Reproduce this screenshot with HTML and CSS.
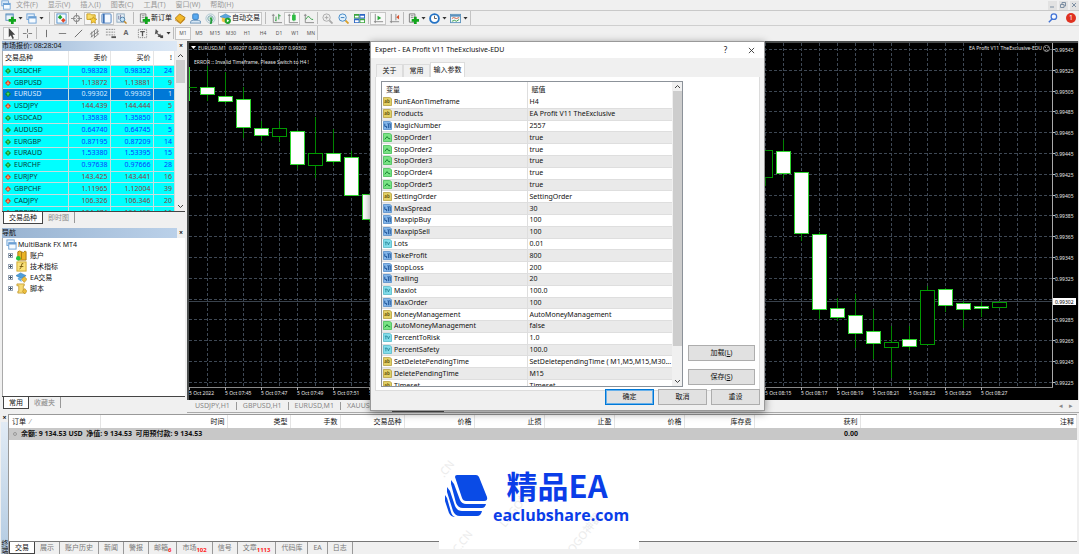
FILE: index.html
```
<!DOCTYPE html>
<html>
<head>
<meta charset="utf-8">
<title>MultiBank FX MT4</title>
<link rel="stylesheet" href="styles.css">
</head>
<body>
<svg class="defs" aria-hidden="true">
  <symbol id="win" viewBox="0 0 12 12"><rect x="1" y="1" width="8" height="6" fill="#e6f1fb" stroke="#6a9fd4"/><rect x="3" y="4" width="8" height="7" fill="#f6fbff" stroke="#6a9fd4"/><path d="M3 5h8" stroke="#6a9fd4" stroke-width="2"/></symbol>
  <symbol id="chartadd" viewBox="0 0 12 12"><rect x="1" y="1" width="8" height="7" fill="#eaf4fb" stroke="#5a8fbd"/><path d="M1 2h8" stroke="#5a8fbd"/><path d="M8 4v8M4 8h8" stroke="#12a51c" stroke-width="3"/></symbol>
  <symbol id="docadd" viewBox="0 0 12 12"><path d="M1.500 1h6v9h-6z" fill="#f4f4f4" stroke="#777"/><path d="M3 3h3M3 5h3" stroke="#888"/><path d="M8 4v8M4 8h8" stroke="#12a51c" stroke-width="3"/></symbol>
  <symbol id="watch" viewBox="0 0 12 12"><rect x="1" y="1" width="10" height="10" fill="#f3faff" stroke="#5390cc"/><path d="M4.500 2l2.500 2.500L4.500 7 2 4.500z" fill="#1ea52d"/><path d="M8 5.500L10.500 8 8 10.500 5.500 8z" fill="#e0492a"/></symbol>
  <symbol id="target" viewBox="0 0 12 12"><circle cx="6" cy="6" r="3.200" fill="none" stroke="#888" stroke-width="1.200"/><path d="M6 0v5M6 7v5M0 6h5M7 6h5" stroke="#888"/></symbol>
  <symbol id="stars" viewBox="0 0 12 12"><path d="M1 1h4l1 1h4v5H1z" fill="#f8dc69" stroke="#c89c1e"/><path d="M8 4l1.200 2.400 2.600.3-1.900 1.800.5 2.700L8 10l-2.400 1.200.5-2.700-1.900-1.800 2.600-.3z" fill="#f8cf3c" stroke="#b98710" stroke-width=".7"/></symbol>
  <symbol id="panel" viewBox="0 0 12 12"><rect x="1" y="1" width="10" height="10" rx="1" fill="#f4f9ff" stroke="#4a7fc0"/><path d="M3 1v10" stroke="#3f72b5" stroke-width="2"/></symbol>
  <symbol id="tester" viewBox="0 0 12 12"><rect x="1" y="1" width="8" height="9" fill="#e8f1f8" stroke="#8ba7be"/><path d="M3 3v4M5 2v4" stroke="#779"/><circle cx="7" cy="7" r="2.500" fill="#c6e3f7" stroke="#4a7da6"/><path d="M9 9l2.500 2.500" stroke="#c38a28" stroke-width="1.600"/></symbol>
  <symbol id="gold" viewBox="0 0 12 12"><path d="M0 6l5-5 6 4-5 6z" fill="#f2b92a" stroke="#b07a12"/><path d="M0 7l6 4 5-6v2l-5 5-6-4z" fill="#c78715"/></symbol>
  <symbol id="user" viewBox="0 0 12 12"><rect x="3" y="1" width="6" height="6" rx="1" fill="#5aaaf0" stroke="#3579bd"/><path d="M0 11q1-4 4-3h5q3 0 3 3z" fill="#d7e7f5" stroke="#6a94ba"/></symbol>
  <symbol id="signal" viewBox="0 0 12 12"><circle cx="6" cy="6" r="5" fill="none" stroke="#a9c4cf"/><circle cx="6" cy="6" r="3" fill="#cfe6d5" stroke="#7ba5b8"/><path d="M6 5q2 3 0 7" stroke="#259c3b" stroke-width="2" fill="none"/></symbol>
  <symbol id="auto" viewBox="0 0 12 12"><path d="M0 4l6-3 6 3-6 2z" fill="#5ba7dc" stroke="#2f7cb4" stroke-width=".6"/><path d="M2 5v4l4 2V6z" fill="#efc44b"/><circle cx="8.500" cy="8.500" r="3.400" fill="#1fa32e"/><path d="M7.500 6.800v3.400l2.700-1.700z" fill="#fff"/></symbol>
  <symbol id="bars" viewBox="0 0 12 12"><path d="M2.500 1v9.500H12M1 2.500h3" stroke="#888" fill="none"/><path d="M5.500 4v5M4.500 8h1M8.500 1v6M8.500 3h2" stroke="#2a9b3b"/></symbol>
  <symbol id="candle" viewBox="0 0 12 12"><path d="M2.500 1v9.500H12M1 2.500h3" stroke="#888" fill="none"/><path d="M7.500 0v9" stroke="#2a9b3b"/><rect x="5.500" y="2" width="4" height="6" fill="#2dbb42"/></symbol>
  <symbol id="line" viewBox="0 0 12 12"><path d="M2.500 1v9.500H12M1 2.500h3" stroke="#888" fill="none"/><path d="M3 7q2.500-5 4.500-2t3.500 2" stroke="#2a9b3b" fill="none"/></symbol>
  <symbol id="zin" viewBox="0 0 12 12"><path d="M8 8l3.500 3.500" stroke="#aaa" stroke-width="2"/><circle cx="5" cy="5" r="4" fill="#eee" stroke="#aaa"/><path d="M3 5h4M5 3v4" stroke="#aaa"/></symbol>
  <symbol id="zout" viewBox="0 0 12 12"><path d="M8 8l3.500 3.500" stroke="#d9a02c" stroke-width="2"/><circle cx="5" cy="5" r="4" fill="#e2f1fc" stroke="#3b84c6"/><path d="M3 5h4" stroke="#2f74b4"/></symbol>
  <symbol id="tile" viewBox="0 0 12 12"><path d="M0 1h6v5H0zM6 6h6v5H6z" fill="#3da63f"/><path d="M6 1h6v5H6zM0 6h6v5H0z" fill="#2c66c4"/><path d="M1 3h4v2H1zM7 3h4v2H7zM1 8h4v2H1zM7 8h4v2H7z" fill="#fff"/></symbol>
  <symbol id="scroll" viewBox="0 0 12 12"><path d="M2.500 1v10M1 9.500h10" stroke="#888"/><path d="M5 3v5l4-2.500z" fill="#28a93a"/></symbol>
  <symbol id="shift" viewBox="0 0 12 12"><path d="M2.500 1v10M1 9.500h10M7.500 1v7" stroke="#888"/><path d="M11 2v5L8 4.500z" fill="#d8512d"/></symbol>
  <symbol id="clock" viewBox="0 0 12 12"><circle cx="6" cy="6" r="4.800" fill="#fff" stroke="#2372c4" stroke-width="2"/><path d="M6 3v3h2.500" stroke="#555" fill="none"/></symbol>
  <symbol id="template" viewBox="0 0 12 12"><rect x=".5" y="1.500" width="11" height="9" fill="#f3f9fd" stroke="#5d92bd"/><path d="M1 3h10" stroke="#5d92bd" stroke-width="2"/><path d="M2 6l2-1 3 1 3-1" stroke="#cf5b39" fill="none"/><path d="M2 9l3-1 2 1 3-2" stroke="#3a9d45" fill="none"/></symbol>
  <symbol id="cursor" viewBox="0 0 12 12"><path d="M3 0v10l2.300-2.200L7 12l1.700-.8L7 7.300h3z" fill="#444"/></symbol>
  <symbol id="cross" viewBox="0 0 12 12"><path d="M6 1v4M6 7v4M1 6h4M7 6h4" stroke="#777"/></symbol>
  <symbol id="vl" viewBox="0 0 12 12"><path d="M6 2v8" stroke="#666"/></symbol>
  <symbol id="hl" viewBox="0 0 12 12"><path d="M2 6h8" stroke="#777"/></symbol>
  <symbol id="tl" viewBox="0 0 12 12"><path d="M2 10l8-8" stroke="#666"/></symbol>
  <symbol id="channel" viewBox="0 0 12 12"><path d="M1 7l7-6M2 10l9-7M5 11l6-5M3 4v6M6 3v7M9 1v6" stroke="#777" stroke-width=".9"/></symbol>
  <symbol id="fibo" viewBox="0 0 12 12"><path d="M1 1.500h10M1 4.500h10M1 7.500h10" stroke="#888" stroke-dasharray="2 1"/><path d="M7 10h5" stroke="#555" stroke-width="2"/></symbol>
  <symbol id="tbox" viewBox="0 0 12 12"><rect x="1.500" y="1.500" width="9" height="9" fill="none" stroke="#777" stroke-dasharray="1 1"/><path d="M3.500 4h5M6 4v5" stroke="#555" stroke-width="1.400"/></symbol>
  <symbol id="arrows" viewBox="0 0 12 12"><path d="M3 1l3 3-1.500 1.500L7 7l1-1 1 4-4-.5L6 8 3.500 6 2 7z" fill="#555"/><path d="M8 8h3v3H8z" fill="#444"/></symbol>
  <symbol id="find" viewBox="0 0 12 12"><circle cx="7.500" cy="4" r="3" fill="#f8fbff" stroke="#4173d6" stroke-width="1.400"/><path d="M5.500 6.500L2 10" stroke="#4173d6" stroke-width="1.600"/></symbol>
  <symbol id="up" viewBox="0 0 8 8"><path d="M4 0l4 4-4 4-4-4z" fill="#0b8d2a"/><path d="M4 1.500L6.500 4H5v2H3V4H1.500z" fill="#4fd965"/></symbol>
  <symbol id="dn" viewBox="0 0 8 8"><path d="M4 0l4 4-4 4-4-4z" fill="#d23a17"/><path d="M4 6.500L1.500 4H3V2h2v2h1.500z" fill="#ff9a6a"/></symbol>
  <symbol id="s" viewBox="0 0 10 10"><path d="M.5.5h7l2 1.500v7.500h-9z" fill="#e2d066" stroke="#b9a548"/><text x="1.500" y="7" font-size="5" font-weight="700" fill="#6b5a10">ab</text></symbol>
  <symbol id="i" viewBox="0 0 10 10"><path d="M.5.5h7l2 1.500v7.500h-9z" fill="#83b6ea" stroke="#5b92cb"/><path d="M2 3v3h2v2M5 3h1v5M7 3h1v5" stroke="#174e91" fill="none"/></symbol>
  <symbol id="b" viewBox="0 0 10 10"><path d="M.5.5h7l2 1.500v7.500h-9z" fill="#78e383" stroke="#4dc05e"/><path d="M2 7l2.500-3L6 6l2 .5" stroke="#0b7428" fill="none"/></symbol>
  <symbol id="d" viewBox="0 0 10 10"><path d="M.5.5h7l2 1.500v7.500h-9z" fill="#82dcea" stroke="#5bbccb"/><path d="M2 3.500h2.500M3.200 3.500V7M5 3.500l1 3 1.500-3" stroke="#18788a" stroke-width=".8" fill="none"/></symbol>
  <symbol id="acct" viewBox="0 0 12 12"><path d="M2 2q2-2 4 0t4-1l1 1v9H2z" fill="#eab325" stroke="#a87810"/><path d="M6 2v8" stroke="#a87810"/><circle cx="2.500" cy="9" r="2.500" fill="#1fc43c"/></symbol>
  <symbol id="ind" viewBox="0 0 12 12"><rect x="1" y="1" width="10" height="10" fill="#f9e27b" stroke="#cfa52a"/><path d="M8 3q-2-1-2 1.500T4 9M4 6h4" stroke="#7a5c10" fill="none"/></symbol>
  <symbol id="ea" viewBox="0 0 12 12"><path d="M0 4l5-3 6 3-5 3z" fill="#4e9edb" stroke="#2a74aa" stroke-width=".6"/><path d="M2 6v2l4 3V7z" fill="#68aee2"/><path d="M9 5l3 3-3 3.500L6 8z" fill="#edbf3e" stroke="#ad7f13" stroke-width=".6"/></symbol>
  <symbol id="script" viewBox="0 0 12 12"><path d="M1 1h8v2H8v5h2v3H2V9h1V3H1z" fill="#f7da74" stroke="#bd9324" stroke-width=".8"/><path d="M9.500 6l2.500 3-2.500 3L7 9z" fill="#edbf3e" stroke="#ad7f13" stroke-width=".6"/></symbol>
</svg>

<div class="app">
  <nav class="menubar">
    <svg class="ic"><use href="#win"/></svg>
    <button>文件(F)</button><button>显示(V)</button><button>插入(I)</button><button>图表(C)</button><button>工具(T)</button><button>窗口(W)</button><button>帮助(H)</button>
    <div class="wincontrols">
      <button aria-label="Minimize"><svg viewBox="0 0 8 8"><path d="M2 6h4"/></svg></button>
      <button aria-label="Restore"><svg viewBox="0 0 8 8"><path d="M3 3V1.500h3.500V5H5M1.500 3.500H5v3H1.500z"/></svg></button>
      <button aria-label="Close"><svg viewBox="0 0 8 8"><path d="M2 2l4 4M6 2L2 6"/></svg></button>
    </div>
  </nav>

  <div class="toolrow">
    <div class="toolbar main-tools">
      <button class="tool" aria-label="New chart"><svg class="ic"><use href="#chartadd"/></svg></button><span class="caret"></span>
      <button class="tool" aria-label="Profiles"><svg class="ic"><use href="#win"/></svg></button><span class="caret"></span><span class="sep slim"></span>
      <button class="tool on" aria-label="Market watch"><svg class="ic"><use href="#watch"/></svg></button>
      <button class="tool" aria-label="Data window"><svg class="ic"><use href="#target"/></svg></button>
      <button class="tool on" aria-label="Navigator"><svg class="ic"><use href="#stars"/></svg></button>
      <button class="tool on" aria-label="Terminal"><svg class="ic"><use href="#panel"/></svg></button>
      <button class="tool" aria-label="Tester"><svg class="ic"><use href="#tester"/></svg></button><span class="sep slim"></span>
      <button class="tool wide"><svg class="ic"><use href="#docadd"/></svg>新订单</button>
      <button class="tool" aria-label="MetaEditor"><svg class="ic"><use href="#gold"/></svg></button>
      <button class="tool" aria-label="Account"><svg class="ic"><use href="#user"/></svg></button>
      <button class="tool" aria-label="Signals"><svg class="ic"><use href="#signal"/></svg></button>
      <button class="tool wide on"><svg class="ic"><use href="#auto"/></svg>自动交易</button><span class="sep slim end"></span>
    </div>
    <div class="toolbar chart-tools">
      <button class="tool" aria-label="Bars"><svg class="ic"><use href="#bars"/></svg></button>
      <button class="tool on" aria-label="Candles"><svg class="ic"><use href="#candle"/></svg></button>
      <button class="tool" aria-label="Line"><svg class="ic"><use href="#line"/></svg></button><span class="sep slim"></span>
      <button class="tool" aria-label="Zoom in"><svg class="ic"><use href="#zin"/></svg></button>
      <button class="tool" aria-label="Zoom out"><svg class="ic"><use href="#zout"/></svg></button>
      <button class="tool" aria-label="Tile"><svg class="ic"><use href="#tile"/></svg></button><span class="sep slim"></span>
      <button class="tool on" aria-label="Auto scroll"><svg class="ic"><use href="#scroll"/></svg></button>
      <button class="tool" aria-label="Chart shift"><svg class="ic"><use href="#shift"/></svg></button><span class="sep slim"></span>
      <button class="tool" aria-label="Indicators"><svg class="ic"><use href="#docadd"/></svg></button><span class="caret"></span>
      <button class="tool" aria-label="Periods"><svg class="ic"><use href="#clock"/></svg></button><span class="caret"></span>
      <button class="tool" aria-label="Templates"><svg class="ic"><use href="#template"/></svg></button><span class="caret"></span>
    </div>
    <div class="notices"><svg class="ic"><use href="#find"/></svg><span class="badge">1</span></div>
  </div>

  <div class="toolrow second">
    <div class="toolbar draw-tools">
      <button class="tool on" aria-label="Cursor"><svg class="ic"><use href="#cursor"/></svg></button>
      <button class="tool" aria-label="Crosshair"><svg class="ic"><use href="#cross"/></svg></button><span class="sep slim"></span>
      <button class="tool" aria-label="Vertical line"><svg class="ic"><use href="#vl"/></svg></button>
      <button class="tool" aria-label="Horizontal line"><svg class="ic"><use href="#hl"/></svg></button>
      <button class="tool" aria-label="Trend line"><svg class="ic"><use href="#tl"/></svg></button>
      <button class="tool" aria-label="Channel"><svg class="ic"><use href="#channel"/></svg></button>
      <button class="tool" aria-label="Fibonacci"><svg class="ic"><use href="#fibo"/></svg></button>
      <button class="tool letter">A</button>
      <button class="tool" aria-label="Label"><svg class="ic"><use href="#tbox"/></svg></button>
      <button class="tool" aria-label="Arrows"><svg class="ic"><use href="#arrows"/></svg></button><span class="caret"></span><span class="sep slim"></span>
    </div>
    <div class="toolbar periods">
      <button class="tool on">M1</button><button class="tool">M5</button><button class="tool">M15</button><button class="tool">M30</button><button class="tool">H1</button><button class="tool">H4</button><button class="tool">D1</button><button class="tool">W1</button><button class="tool">MN</button>
    </div>
  </div>

  <main class="work">
    <aside class="dock">
      <section class="panel market">
        <header class="ptitle"><span>市场报价: 08:28:04</span><button aria-label="Close">×</button></header>
        <div class="pbody">
          <div class="clip">
          <table class="quotes">
            <thead><tr><th>交易品种</th><th>卖价</th><th>买价</th><th>!</th></tr></thead>
            <tbody>
              <tr class="up"><td><svg><use href="#up"/></svg>USDCHF</td><td>0.98328</td><td>0.98352</td><td>24</td></tr>
              <tr class="dn"><td><svg><use href="#dn"/></svg>GBPUSD</td><td>1.13872</td><td>1.13881</td><td>9</td></tr>
              <tr class="sel"><td><svg><use href="#up"/></svg>EURUSD</td><td>0.99302</td><td>0.99303</td><td>1</td></tr>
              <tr class="dn"><td><svg><use href="#dn"/></svg>USDJPY</td><td>144.439</td><td>144.444</td><td>5</td></tr>
              <tr class="up"><td><svg><use href="#up"/></svg>USDCAD</td><td>1.35838</td><td>1.35850</td><td>12</td></tr>
              <tr class="up"><td><svg><use href="#up"/></svg>AUDUSD</td><td>0.64740</td><td>0.64745</td><td>5</td></tr>
              <tr class="up"><td><svg><use href="#up"/></svg>EURGBP</td><td>0.87195</td><td>0.87209</td><td>14</td></tr>
              <tr class="up"><td><svg><use href="#up"/></svg>EURAUD</td><td>1.53380</td><td>1.53395</td><td>15</td></tr>
              <tr class="up"><td><svg><use href="#up"/></svg>EURCHF</td><td>0.97638</td><td>0.97666</td><td>28</td></tr>
              <tr class="dn"><td><svg><use href="#dn"/></svg>EURJPY</td><td>143.425</td><td>143.441</td><td>16</td></tr>
              <tr class="dn"><td><svg><use href="#dn"/></svg>GBPCHF</td><td>1.11965</td><td>1.12004</td><td>39</td></tr>
              <tr class="dn"><td><svg><use href="#dn"/></svg>CADJPY</td><td>106.326</td><td>106.346</td><td>20</td></tr>
              <tr class="dn"><td><svg><use href="#dn"/></svg>GBPJPY</td><td>164.474</td><td>164.490</td><td>16</td></tr>
            </tbody>
          </table>
          </div>
          <div class="sbar"><svg viewBox="0 0 9 9"><path d="M2 6l2.500-2.500L7 6"/></svg><i class="thumb short"></i><svg viewBox="0 0 9 9"><path d="M2 3l2.500 2.500L7 3"/></svg></div>
        </div>
        <div class="ptabs"><button class="on">交易品种</button><button>即时图</button></div>
      </section>
      <section class="panel navigator">
        <header class="ptitle"><span>导航</span><button aria-label="Close">×</button></header>
        <ul class="tree">
          <li class="root"><svg class="ic"><use href="#win"/></svg>MultiBank FX MT4</li>
          <li><i class="plus"></i><svg class="ic"><use href="#acct"/></svg>账户</li>
          <li><i class="plus"></i><svg class="ic"><use href="#ind"/></svg>技术指标</li>
          <li><i class="plus"></i><svg class="ic"><use href="#ea"/></svg>EA交易</li>
          <li><i class="plus"></i><svg class="ic"><use href="#script"/></svg>脚本</li>
        </ul>
        <div class="ptabs"><button class="on">常用</button><button>收藏夹</button></div>
      </section>
    </aside>
    <section class="charts">
      <svg id="chart" class="chart" viewBox="187 41 892 359" preserveAspectRatio="xMinYMin slice"></svg>
      <div class="ctabs"><button>USDJPY,H1</button><button>GBPUSD,H1</button><button>EURUSD,M1</button><button>XAUUSD,H1</button><button class="cur" aria-label="Current chart"></button><span class="arr">◂</span><span class="arr">▸</span></div>
    </section>
  </main>

  <section class="terminal">
    <div class="tstrip"><button aria-label="Close">×</button><span>终端</span></div>
    <div class="tmain">
      <table class="orders">
        <colgroup><col class="w-o"><col class="w-t"><col class="w-k"><col class="w-l"><col class="w-s"><col class="w-p"><col class="w-p"><col class="w-p"><col class="w-p"><col class="w-p"><col class="w-g"><col></colgroup>
        <thead><tr><th>订单 &nbsp;<small>⁄</small></th><th>时间</th><th>类型</th><th>手数</th><th>交易品种</th><th>价格</th><th>止损</th><th>止盈</th><th>价格</th><th>库存费</th><th>获利</th><th>注释</th></tr></thead>
        <tbody><tr><td colspan="10"><i class="dot"></i>余额: 9 134.53 USD &nbsp;净值: 9 134.53 &nbsp;可用预付款: 9 134.53</td><td>0.00</td><td></td></tr></tbody>
      </table>
      <div class="ttabs">
        <button class="on">交易</button><button>展示</button><button>账户历史</button><button>新闻</button><button>警报</button><button>邮箱<sub>6</sub></button><button>市场<sub>102</sub></button><button>信号</button><button>文章<sub>1113</sub></button><button>代码库</button><button>EA</button><button>日志</button>
      </div>
    </div>
  </section>

  <div class="brand">
    <svg class="haze" viewBox="0 0 200 93"><g fill="#ececec" font-size="11"><text transform="translate(5 22) rotate(-52)">.CN</text><text transform="translate(66 72) rotate(-52)">LOGO神器</text><text transform="translate(14 104) rotate(-52)">GC.CN</text><text transform="translate(134 98) rotate(-52)">OGO神器</text></g></svg>
    <svg class="mark" viewBox="0 0 43 44"><g fill="#0a4be6"><path d="M10 3q0-2 2-2h19q2 0 3 2l8 20q1 4-3 4H21q-3 0-4-3z"/><path d="M6 6l3 4 6 16q2 4 6 4h20q-1 4-4 4H18q-5 0-7-5L6 10z"/><path d="M2 13l3 4 5 15q2 5 7 5h20q-1 5-5 5H15q-5 0-7-5L2 18z"/><path d="M0 21l2 3 4 14q1 4 4 5-4 0-6-4L0 27z"/></g></svg>
    <div class="words"><strong>精品EA</strong><b>eaclubshare.com</b></div>
  </div>

  <div class="dialog" role="dialog" aria-label="Expert properties">
    <header class="dtitle"><span>Expert - EA Profit V11 TheExclusive-EDU</span><button>?</button><button class="x" aria-label="Close"><svg viewBox="0 0 8 8"><path d="M1 1l6 6M7 1L1 7"/></svg></button></header>
    <div class="dtabs"><button>关于</button><button>常用</button><button class="on">输入参数</button></div>
    <div class="dpage">
      <div class="list">
        <div class="lclip">
        <table class="params">
          <thead><tr><th>变量</th><th>赋值</th></tr></thead>
          <tbody>
            <tr><td><svg><use href="#s"/></svg>RunEAonTimeframe</td><td>H4</td></tr>
            <tr><td><svg><use href="#s"/></svg>Products</td><td>EA Profit V11 TheExclusive</td></tr>
            <tr><td><svg><use href="#i"/></svg>MagicNumber</td><td>2557</td></tr>
            <tr><td><svg><use href="#b"/></svg>StopOrder1</td><td>true</td></tr>
            <tr><td><svg><use href="#b"/></svg>StopOrder2</td><td>true</td></tr>
            <tr><td><svg><use href="#b"/></svg>StopOrder3</td><td>true</td></tr>
            <tr><td><svg><use href="#b"/></svg>StopOrder4</td><td>true</td></tr>
            <tr><td><svg><use href="#b"/></svg>StopOrder5</td><td>true</td></tr>
            <tr><td><svg><use href="#s"/></svg>SettingOrder</td><td>SettingOrder</td></tr>
            <tr><td><svg><use href="#i"/></svg>MaxSpread</td><td>30</td></tr>
            <tr><td><svg><use href="#i"/></svg>MaxpipBuy</td><td>100</td></tr>
            <tr><td><svg><use href="#i"/></svg>MaxpipSell</td><td>100</td></tr>
            <tr><td><svg><use href="#d"/></svg>Lots</td><td>0.01</td></tr>
            <tr><td><svg><use href="#i"/></svg>TakeProfit</td><td>800</td></tr>
            <tr><td><svg><use href="#i"/></svg>StopLoss</td><td>200</td></tr>
            <tr><td><svg><use href="#i"/></svg>Trailing</td><td>20</td></tr>
            <tr><td><svg><use href="#d"/></svg>Maxlot</td><td>100.0</td></tr>
            <tr><td><svg><use href="#i"/></svg>MaxOrder</td><td>100</td></tr>
            <tr><td><svg><use href="#s"/></svg>MoneyManagement</td><td>AutoMoneyManagement</td></tr>
            <tr><td><svg><use href="#b"/></svg>AutoMoneyManagement</td><td>false</td></tr>
            <tr><td><svg><use href="#d"/></svg>PercentToRisk</td><td>1.0</td></tr>
            <tr><td><svg><use href="#d"/></svg>PercentSafety</td><td>100.0</td></tr>
            <tr><td><svg><use href="#s"/></svg>SetDeletePendingTime</td><td>SetDeletependingTime ( M1,M5,M15,M30...</td></tr>
            <tr><td><svg><use href="#s"/></svg>DeletePendingTime</td><td>M15</td></tr>
            <tr><td><svg><use href="#s"/></svg>Timeset</td><td>Timeset</td></tr>
          </tbody>
        </table>
        </div>
        <div class="sbar"><svg viewBox="0 0 9 9"><path d="M2 6l2.500-2.500L7 6"/></svg><i class="thumb tall"></i><svg viewBox="0 0 9 9"><path d="M2 3l2.500 2.500L7 3"/></svg></div>
      </div>
      <div class="side"><button class="btn">加载(<u>L</u>)</button><button class="btn">保存(<u>S</u>)</button></div>
    </div>
    <footer class="dfoot"><button class="btn primary">确定</button><button class="btn">取消</button><button class="btn">重设</button></footer>
  </div>
</div>
<script src="chart.js"></script>
</body>
</html>
```
FILE: styles.css
```
* { box-sizing: border-box; }
body { margin: 0; background: #f0f0f0; color: #111; font: 7px/10px "Noto Sans", "Noto Sans CJK SC", sans-serif; overflow: hidden; }
button { font: inherit; color: inherit; background: none; border: 0; padding: 0; margin: 0; white-space: nowrap; }
table { border-collapse: collapse; table-layout: fixed; width: 100%; }
th { font-weight: 400; }
.defs { position: absolute; width: 0; height: 0; }
.ic { width: 11px; height: 11px; flex: none; display: block; }
.app { position: relative; min-height: 100vh; display: flex; flex-direction: column; }

.menubar { height: 11px; display: flex; align-items: center; gap: 10px; padding-left: 1px; color: #999; border-bottom: 1px solid #c9c9c9; }
.menubar > .ic { width: 10px; height: 10px; margin-right: -5px; }
.wincontrols { margin-left: auto; display: flex; gap: 2px; }
.wincontrols button { width: 9px; height: 9px; background: #e2e2e2; }
.wincontrols svg { display: block; width: 8px; height: 8px; fill: none; stroke: #7d8fa3; }

.toolrow { height: 15px; display: flex; align-items: center; border-bottom: 1px solid #cfcfcf; }
.toolrow.second { height: 14px; border-bottom: 0; }
.toolbar { display: flex; align-items: center; height: 100%; }
.main-tools { padding-left: 3px; width: 268px; }
.chart-tools { width: 203px; border-right: 1px solid #c4c4c4; }
.draw-tools { width: 175px; padding-left: 3px; }
.periods { width: 143px; border-right: 1px solid #c4c4c4; color: #555; font-size: 5px; }
.tool { width: 16px; height: 13px; display: flex; align-items: center; justify-content: center; flex: none; }
.main-tools .tool { width: 15px; }
.tool.on { background: #f8f8f8; border: 1px solid #c6c6c6; }
.main-tools .wide { width: auto; padding: 0 1px; gap: 1px; }
.tool.letter { font-weight: 700; color: #666; }
.caret { width: 5px; height: 3px; background: #333; clip-path: polygon(0 0, 100% 0, 50% 100%); flex: none; margin-right: 1px; }
.chart-tools .caret { margin-right: 0; }
.sep { width: 1px; height: 12px; margin: 0 1px; background: #bbb; flex: none; }
.main-tools .sep { margin: 0 4px; }
.main-tools .end { margin: 0 2px 0 auto; }
.notices { margin-left: auto; display: flex; gap: 8px; align-items: center; padding-right: 3px; }
.badge { width: 10px; height: 10px; border-radius: 5px; background: #df3120; color: #fff; text-align: center; }

.work { display: flex; height: 373px; flex: none; }
.dock { width: 187px; flex: none; padding: 1px 2px 0 2px; display: flex; flex-direction: column; gap: 4px; }
.panel { display: flex; flex-direction: column; }
.ptitle { height: 10px; display: flex; justify-content: space-between; background: linear-gradient(90deg, #98b3d1, #c8daee 60%, #dfeaf6); }
.ptitle button { width: 8px; font-weight: 700; background: #f0f0f0; }
.pbody { display: flex; height: 160px; background: #fff; border-left: 1px solid #aaa; }
.clip { flex: 1; overflow: hidden; }
.quotes { height: 168px; }
.quotes th { height: 14px; text-align: right; padding: 0 2px; border-right: 1px solid #e5e5e5; }
.quotes th:first-child { text-align: left; width: 65px; }
.quotes th:nth-child(2) { width: 42px; }
.quotes th:nth-child(3) { width: 43px; }
.quotes td { padding: 0 2px; text-align: right; background: #0ff; border: 1px solid #c7dede; border-left: 0; line-height: 10px; }
.quotes td:first-child { text-align: left; color: #043c3c; }
.quotes svg { width: 6px; height: 6px; margin: 0 3px 0 0; vertical-align: -1px; }
.quotes .up { color: #0a3cff; }
.quotes .dn { color: #8a4040; }
.quotes .sel td { background: #0078d7; color: #d9ecff; }
.sbar { width: 10px; flex: none; background: #f0f0f0; display: flex; flex-direction: column; align-items: center; }
.sbar svg { width: 9px; height: 9px; fill: none; stroke: #444; flex: none; }
.thumb { width: 9px; background: #cdcdcd; }
.thumb.short { height: 23px; margin-bottom: auto; }
.thumb.tall { height: 255px; margin-bottom: auto; }
.ptabs { display: flex; height: 13px; border-top: 1px solid #444; padding-left: 1px; }
.ptabs button { padding: 0 5px; height: 11px; color: #888; border-right: 1px solid #999; }
.ptabs .on, .ttabs .on { background: #fff; color: #111; border: 1px solid #444; border-top: 0; }
.ptabs .on { height: 12px; }
.navigator { flex: 1; margin-bottom: 4px; }
.navigator .ptitle { background: linear-gradient(90deg, #98b3d1, #bcd2ea); }
.tree { flex: 1; margin: 0; padding: 1px 0 0 3px; list-style: none; background: #fff; border-left: 1px solid #aaa; }
.tree li { height: 11px; display: flex; align-items: center; gap: 3px; }
.tree .root { gap: 1px; }
.tree .plus { width: 5px; height: 5px; margin-left: 2px; border: 1px solid #9aa7b8; background: linear-gradient(#456, #456) center / 1px 3px no-repeat, linear-gradient(#456, #456) center / 3px 1px no-repeat; }

.charts { flex: 1; min-width: 0; display: flex; flex-direction: column; padding-top: 1px; }
.chart { display: block; width: 100%; height: 359px; background: #000; font: 5px "Noto Sans", sans-serif; }
.ctabs { flex: 1; display: flex; align-items: center; padding: 0 3px 0 2px; color: #888; border-bottom: 1px solid #aaa; }
.ctabs button { padding: 0 6px; line-height: 8px; border-right: 1px solid #999; }
.ctabs button:nth-child(4) { border: 0; }
.ctabs .cur { align-self: flex-end; width: 52px; height: 10px; margin-right: auto; background: #555; border: 0; }
.arr { width: 10px; text-align: center; }

.terminal { display: flex; flex: 1; padding: 1px 2px 0 1px; }
.tstrip { width: 7px; display: flex; flex-direction: column; justify-content: space-between; background: linear-gradient(#e4edf6, #b3cbe2); }
.tstrip button { line-height: 8px; font-weight: 700; background: #f0f0f0; }
.tstrip span { writing-mode: vertical-rl; line-height: 7px; }
.tmain { flex: 1; display: flex; flex-direction: column; background: #fff; border-top: 1px solid #999; border-left: 1px solid #999; }
.orders th { height: 13px; padding: 0 2px; text-align: right; border-right: 1px solid #e4e4e4; white-space: nowrap; }
.orders th:first-child { text-align: left; padding-left: 3px; }
.orders small { font-size: 7px; color: #888; }
.orders td { height: 12px; padding: 0 2px; text-align: right; background: #c8c8c8; font-weight: 700; }
.orders td:first-child { text-align: left; padding-left: 4px; }
.dot { display: inline-block; width: 4px; height: 4px; margin-right: 4px; border: 1px solid #999; border-radius: 2px; }
.w-o { width: 91px; } .w-t { width: 127px; } .w-k { width: 63px; } .w-l { width: 50px; } .w-s { width: 64px; } .w-p { width: 70px; } .w-g { width: 106px; }
.ttabs { margin-top: auto; height: 13px; display: flex; border-top: 1px solid #777; background: #f0f0f0; color: #777; }
.ttabs button { padding: 0 5px; height: 12px; border-right: 1px solid #999; }
.ttabs sub { color: #f22; font-size: 6px; font-weight: 700; line-height: 6px; vertical-align: -2px; }

.brand { position: absolute; left: 439px; top: 456px; width: 200px; height: 93px; background: #fff; display: flex; padding: 13px 0 0 6px; gap: 5px; color: #0a3de8; }
.haze { position: absolute; left: 0; top: 0; width: 200px; height: 93px; }
.mark { position: relative; width: 43px; height: 44px; margin-top: 5px; }
.words { position: relative; display: flex; flex-direction: column; align-items: center; gap: 4px; }
.words strong { font: 700 31px/32px "Noto Sans CJK SC", sans-serif; padding-right: 8px; }
.words b { font: 700 16px/20px "Open Sans", sans-serif; }

.dialog { position: absolute; left: 370px; top: 41px; width: 395px; background: #f0f0f0; border: 1px solid #999; box-shadow: 0 2px 8px rgba(0,0,0,.45); padding-bottom: 5px; }
.dtitle { height: 16px; background: #fff; display: flex; align-items: center; padding: 0 8px 0 4px; }
.dtitle span { margin-right: auto; }
.dtitle button { width: 9px; margin-left: 17px; font-size: 8px; }
.dtitle svg { width: 7px; height: 7px; stroke: #333; display: block; margin: auto; }
.dtabs { display: flex; align-items: flex-end; padding: 4px 0 0 5px; height: 19px; }
.dtabs button { height: 13px; width: 27px; border: 1px solid #dcdcdc; border-bottom: 0; }
.dtabs .on { height: 15px; width: 35px; background: #fff; }
.dpage { margin: 0 4px; background: #fff; border: 1px solid #dcdcdc; border-top: 0; padding: 4px 3px 3px 5px; display: flex; justify-content: space-between; gap: 5px; }
.list { width: 302px; height: 306px; display: flex; border: 1px solid #8c9299; }
.lclip { flex: 1; overflow: hidden; }
.params { height: 310px; }
.params th { height: 15px; text-align: left; padding: 0 4px; }
.params th:first-child { width: 145px; }
.params td { padding: 0 2px; line-height: 10px; white-space: nowrap; border-bottom: 1px solid #dedede; }
.params td:first-child, .params th:first-child { border-right: 1px solid #dedede; }
.params tbody tr:nth-child(even) { background: #eaeaea; }
.params svg { width: 9px; height: 9px; margin: 0 2px 0 -1px; vertical-align: -2px; }
.side { flex: 1; display: flex; flex-direction: column; justify-content: flex-end; gap: 8px; padding: 0 1px 2px 0; }
.btn { height: 16px; background: #e1e1e1; border: 1px solid #adadad; }
.dfoot { display: flex; justify-content: flex-end; gap: 4px; padding-right: 4px; margin-top: -2px; position: relative; }
.dfoot .btn { width: 49px; }
.dfoot .primary { border: 1px solid #0078d7; outline: 1px solid #69b1ea; outline-offset: -2px; }
```
FILE: chart.js
```
const svg = document.getElementById('chart');
let out = '';
const line = (x1, y1, x2, y2, c, extra = '') => { out += `<line x1="${x1}" y1="${y1}" x2="${x2}" y2="${y2}" stroke="${c}" ${extra}/>`; };
const text = (x, y, s, extra = '') => { out += `<text x="${x}" y="${y}" fill="#e6e6e6" ${extra}>${s}</text>`; };

out += '<rect x="187" y="41" width="892" height="2" fill="#4a4d4d"/><rect x="187" y="41" width="2" height="359" fill="#4a4d4d"/>';
const dash = 'stroke-dasharray="3 2"';
for (let x = 207.5; x < 1050; x += 18) line(x, 43, x, 387, '#3e4854', dash);
for (let i = 0; i < 17; i++) {
  const y = Math.round(49 + i * 20.8) + 0.5;
  line(189, y, 1052, y, '#3e4854', dash);
  line(1052, y, 1055, y, '#bbb');
  text(1055, y + 2, (0.99545 - i * 0.0002).toFixed(5));
}
line(189, 301.5, 1052, 301.5, '#39424c');

// centre x, wick top, wick bottom, body top, body bottom, hollow
const candles = [
  [207.5, 66, 101, 87, 94, 0], [225.5, 72, 104, 96, 101, 0], [243.5, 87, 138, 99, 127, 0],
  [261.5, 121, 141, 128, 135, 0], [279.5, 121, 142, 128, 136, 1], [297.5, 130, 169, 131, 164, 0],
  [315.5, 117, 178, 153, 165, 1], [333.5, 129, 165, 153, 161, 0], [351.5, 151, 196, 157, 195, 0],
  [369.5, 194, 222, 194, 219, 0], [765.5, 150, 186, 150, 177, 1], [783.5, 140, 178, 151, 173, 0],
  [801.5, 172, 241, 172, 233, 0], [819.5, 232, 319, 234, 309, 0], [837.5, 298, 321, 308, 317, 0],
  [855.5, 294, 348, 315, 333, 0], [873.5, 309, 359, 331, 343, 0], [891.5, 326, 378, 342, 347, 1],
  [909.5, 326, 350, 339, 346, 0], [927.5, 286, 345, 290, 344, 1], [945.5, 288, 312, 289, 305, 0],
  [963.5, 301, 328, 303, 309, 0], [981.5, 302, 317, 306, 308, 0], [999.5, 301, 308, 302, 307, 1]
];
line(189.5, 67, 189.5, 101, '#3ce83c');
line(189, 87.5, 197, 87.5, '#008c00');
for (const [x, hi, lo, top, bottom, hollow] of candles) {
  line(x, hi, x, lo, '#008400');
  out += `<rect x="${x - 7}" y="${top + 0.5}" width="14" height="${bottom - top}" fill="${hollow ? '#000' : '#fff'}" stroke="${hollow ? '#009a00' : '#2fd62f'}"/>`;
}

line(1052.5, 43, 1052.5, 388, '#aaa');
line(189, 387.5, 1053, 387.5, '#888');
for (let k = 0; k < 23; k++) {
  const x = 189 + k * 36;
  const m = 43 + k * 2;
  line(x + 0.5, 387, x + 0.5, 390, '#aaa');
  text(x, 395, k === 0 ? '5 Oct 2022' : `5 Oct ${m < 60 ? '07' : '08'}:${String(m % 60).padStart(2, '0')}`);
}
out += '<rect x="1053" y="298" width="23" height="7" fill="#fff"/><text x="1055" y="303.500">0.99302</text>';
out += '<path d="M191 46h5l-2.500 3z" fill="#fff"/>';
out += '<rect x="197" y="45" width="115" height="6"/><rect x="964" y="45" width="86" height="7"/>';
text(198, 49.5, 'EURUSD,M1&#160; 0.99297 0.99302 0.99297 0.99302');
text(194, 63.5, 'ERROR :: Invalid Timeframe, Please Switch to H4 !');
text(1042, 50, 'EA Profit V11 TheExclusive-EDU', 'text-anchor="end"');
out += '<g fill="none" stroke="#ccc" stroke-width=".7"><circle cx="1046.500" cy="48.500" r="3"/><path d="M1045 50.500q1.500-1.500 3 0M1045 47.500h1M1047.500 47.500h1"/></g>';
out += '<rect x="1078" y="41" width="1" height="359" fill="#ddd"/>';
svg.innerHTML = out;
```
